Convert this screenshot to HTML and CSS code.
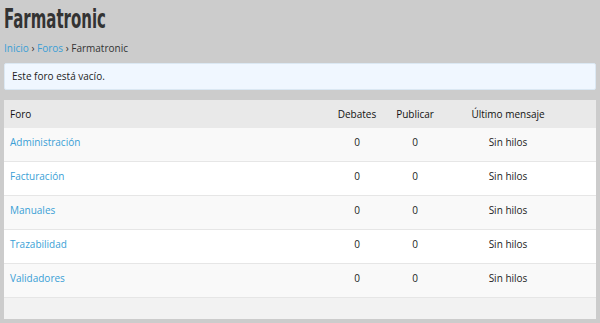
FILE: index.html
```html
<!DOCTYPE html>
<html lang="es">
<head>
  <meta charset="UTF-8" />
  <title>Farmatronic</title>
  <link rel="stylesheet" href="styles.css">
</head>
<body>
  <h1><span class="site-title">Farmatronic</span></h1>
  <div class="breadcrumb">
    <a href="#">Inicio</a> › <a href="#">Foros</a> › Farmatronic
  </div>

  <div class="notice">Este foro está vacío.</div>

  <table class="forums">
    <thead>
      <tr>
        <th class="name">Foro</th>
        <th class="num">Debates</th>
        <th class="num">Publicar</th>
        <th class="last">Último mensaje</th>
      </tr>
    </thead>
    <tbody>
      <tr>
        <td class="name"><a href="#">Administración</a></td>
        <td class="num">0</td>
        <td class="num">0</td>
        <td class="last">Sin hilos</td>
      </tr>
      <tr>
        <td class="name"><a href="#">Facturación</a></td>
        <td class="num">0</td>
        <td class="num">0</td>
        <td class="last">Sin hilos</td>
      </tr>
      <tr>
        <td class="name"><a href="#">Manuales</a></td>
        <td class="num">0</td>
        <td class="num">0</td>
        <td class="last">Sin hilos</td>
      </tr>
      <tr>
        <td class="name"><a href="#">Trazabilidad</a></td>
        <td class="num">0</td>
        <td class="num">0</td>
        <td class="last">Sin hilos</td>
      </tr>
      <tr>
        <td class="name"><a href="#">Validadores</a></td>
        <td class="num">0</td>
        <td class="num">0</td>
        <td class="last">Sin hilos</td>
      </tr>
    </tbody>
    <tfoot>
      <tr><td colspan="4"></td></tr>
    </tfoot>
  </table>
</body>
</html>
```

FILE: styles.css
```css
body {
  margin: 0;
  padding: 0 4px;
  background: #cccccc;
  font-family: "Open Sans", Arial, sans-serif;
  font-size: 10px;
  color: #222;
}
a {
  color: #3a9fd6;
  text-decoration: none;
}
h1 {
  margin: 0;
  padding-top: 3px;
  height: 37px;
  font-family: "DejaVu Sans Condensed", "DejaVu Sans", sans-serif;
  font-weight: bold;
  font-size: 26px;
  line-height: 32px;
  color: #333;
}
/* the original title font is a tall condensed face */
.site-title {
  display: inline-block;
  transform: scaleX(0.64);
  transform-origin: left center;
}
.breadcrumb {
  height: 23px;
  line-height: 16px;
  color: #333;
}
/* ---------- aviso ---------- */
.notice {
  height: 25px;
  line-height: 25px;
  padding: 0 7px;
  background: #f0f7ff;
  border: 1px solid #dbe8f3;
  border-radius: 2px;
  color: #222;
  margin-bottom: 10px;
}
/* ---------- tabla ---------- */
.forums {
  width: 100%;
  border-collapse: collapse;
  background: #fff;
}
.forums th {
  height: 28px;
  background: #e9e9e9;
  font-weight: normal;
  color: #111;
  padding: 0;
}
.forums td {
  padding: 7px 0 12px;
  line-height: 14px;
  vertical-align: top;
  border-top: 1px solid #e6e6e6;
}
.forums tbody tr:nth-child(odd) td { background: #f9f9f9; }
.forums tbody tr:first-child td { border-top: none; }
.forums .name {
  text-align: left;
  padding-left: 6px;
}
.forums .num {
  width: 58px;
  text-align: center;
}
.forums .last {
  width: 128px;
  padding-right: 24px;
  text-align: center;
}
.forums tfoot td {
  height: 21px;
  padding: 0;
  background: #f2f2f2;
  border-top: 1px solid #e6e6e6;
}
```
